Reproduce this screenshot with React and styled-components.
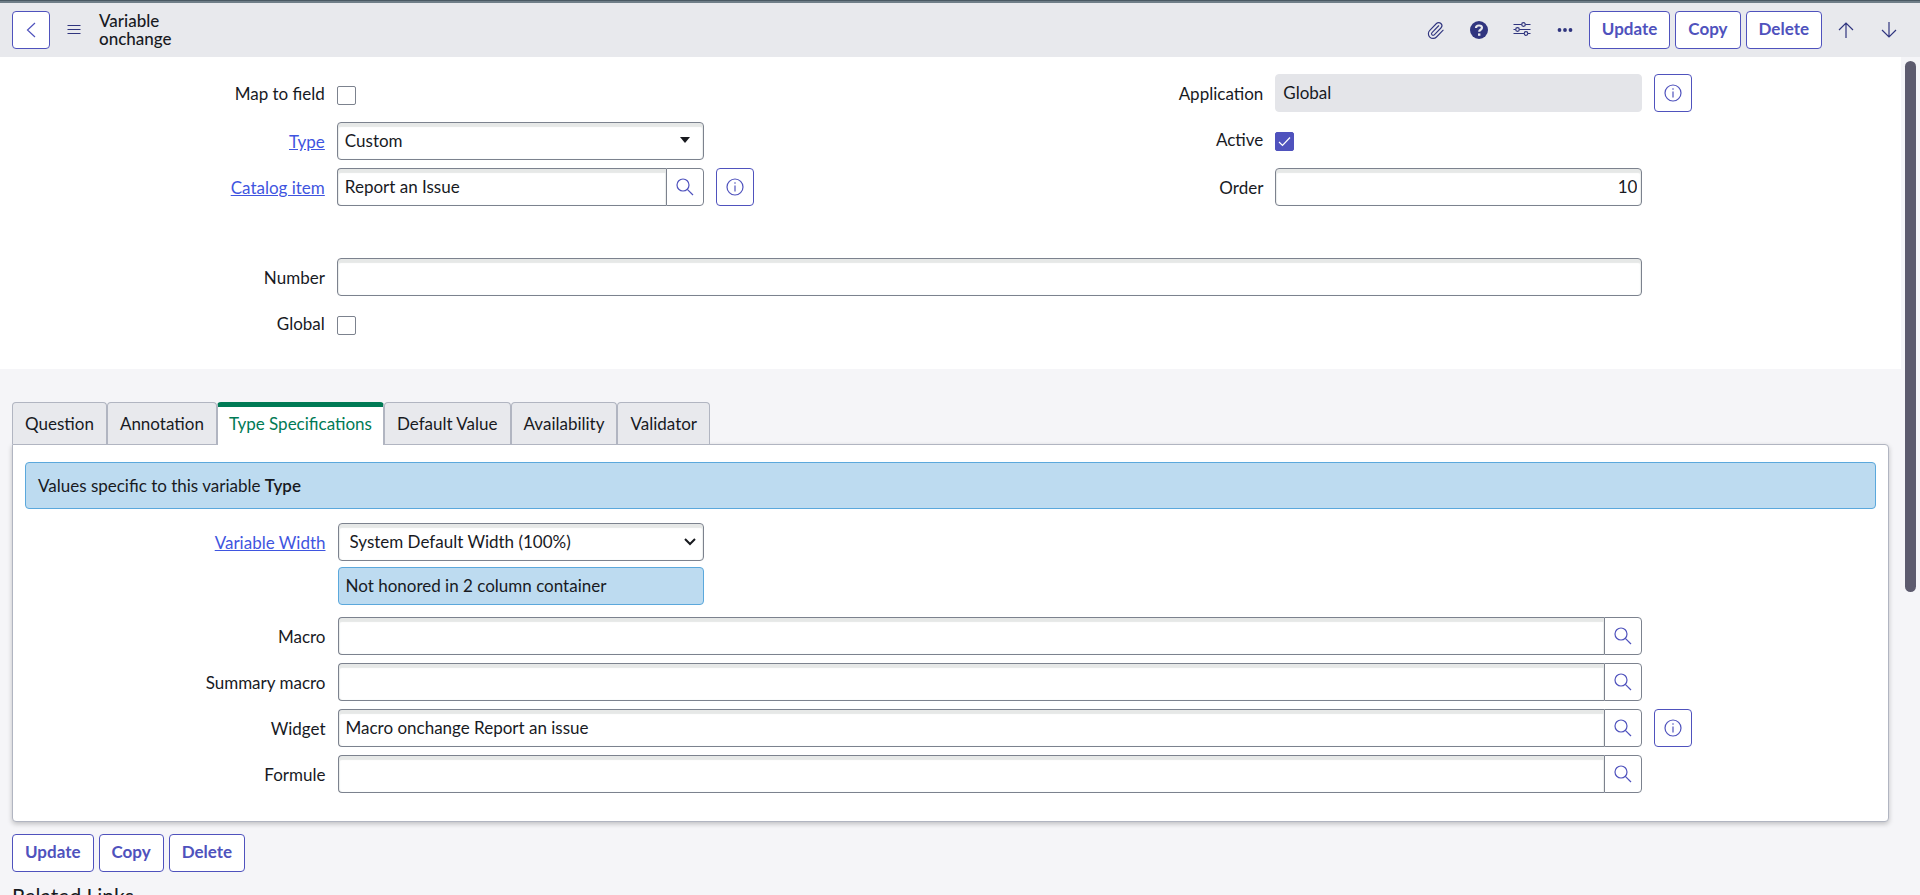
import React, { useState } from 'react'
import styled, { createGlobalStyle, css } from 'styled-components'
import { Paperclip } from 'lucide-react'

const GlobalStyle = createGlobalStyle`
    * { box-sizing: border-box; }
    body {
        margin: 0;
        background-color: #f5f5f8;
        color: #181a1f;
        font-family: Lato, sans-serif;
        font-size: 17px;
        line-height: 24px;
    }
    button, input, select { font: inherit; color: inherit; }
`

const Page = styled.div`
    display: flex;
    flex-direction: column;
    height: 100vh;
    overflow: hidden;
    border-top: 1px solid #4a5963;
`

const Header = styled.header`
    display: flex;
    flex-shrink: 0;
    align-items: center;
    gap: 5px;
    height: 56px;
    padding: 0 12px;
    background-color: #e8e9ed;
    border-top: 2px solid #6f7e88;
`

const Title = styled.h1`
    margin: 0 auto 0 0;
    padding-left: 1px;
    font-size: 17px;
    line-height: 18px;
    font-weight: 500;
    span { display: block; }
`

const Button = styled.button`
    height: 38px;
    padding: 0 12px 2px;
    border: 1px solid #4f52bd;
    border-radius: 4px;
    background-color: #fff;
    color: #4f52bd;
    font-weight: 700;
    cursor: pointer;
`

const SquareButton = styled(Button)`
    display: flex;
    flex-shrink: 0;
    align-items: center;
    justify-content: center;
    width: 38px;
    padding: 0;
`

const BareButton = styled(SquareButton)`
    border-color: transparent;
    background-color: transparent;
    color: #30357f;
`

const Body = styled.div`
    display: flex;
    flex: 1;
    min-height: 0;
`

const Content = styled.main`
    flex: 1;
    min-width: 0;
    overflow: hidden;
`

const ScrollTrack = styled.div`
    width: 19px;
    padding: 4px;
    background-color: #f5f5f8;
`

const ScrollThumb = styled.div`
    width: 11px;
    height: 64%;
    border-radius: 6px;
    background-color: #5d5b6e;
`

const MainSection = styled.section`
    padding: 17px 12px 25px;
    background-color: #fff;
`

const Columns = styled.div`
    display: grid;
    grid-template-columns: 1fr 1fr;
`

const Stack = styled.div`
    display: flex;
    flex-direction: column;
    gap: 8px;
`

const LowerStack = styled(Stack)`
    margin-top: 52px;
`

// label / control / addon, on the same 24 column grid for half and full rows
const Row = styled.div`
    display: grid;
    grid-template-columns: ${props => props.$full
        ? 'minmax(0, 4fr) minmax(0, 17fr) minmax(0, 3fr)'
        : 'minmax(0, 8fr) minmax(0, 10fr) minmax(0, 6fr)'};
    align-items: center;
    min-height: ${props => props.$check ? 40 : 38}px;
`

const Label = styled.label`
    padding-top: ${props => props.$check ? 0 : 2}px;
    text-align: right;
    a { color: #3f55e0; text-decoration: underline; }
`

const Cell = styled.div`
    display: flex;
    min-width: 0;
    padding: 0 12px;
`

const field = css`
    width: 100%;
    min-width: 0;
    height: 38px;
    border: 1px solid #7c828e;
    border-radius: 4px;
    background-color: #fff;
    box-shadow: inset 0 4px 1px #e6e8e7, inset 1px 0 1px #eceeed, inset -1px 0 1px #eceeed;
`

const Input = styled.input`
    ${field}
    padding: 0 ${props => props.$number ? 4 : 7}px 2px 7px;
    text-align: ${props => props.$number ? 'right' : 'left'};
    ${props => props.$joined && css`
        border-right: 0;
        border-radius: 4px 0 0 4px;
    `}
    &:read-only {
        border-color: #e4e5e9;
        background-color: #e4e5e9;
        box-shadow: none;
    }
`

const LookupButton = styled(SquareButton)`
    border-color: #7c828e;
    border-radius: 0 4px 4px 0;
`

const SelectBox = styled.div`
    position: relative;
    width: 100%;
    svg {
        position: absolute;
        top: 0;
        right: 8px;
        height: 36px;
        pointer-events: none;
    }
`

const Select = styled.select`
    ${field}
    display: block;
    padding: 0 32px 0 ${props => props.$indent ? 11 : 7}px;
    appearance: none;
`

const CheckBox = styled.div`
    position: relative;
    display: flex;
    margin-top: 3px;
    svg {
        position: absolute;
        top: 0;
        left: 0;
        pointer-events: none;
    }
`

const Check = styled.input`
    width: 19px;
    height: 19px;
    margin: 0;
    border: 1px solid #7c828e;
    border-radius: 2px;
    background-color: #fff;
    appearance: none;
    &:checked {
        border-color: #4f52bd;
        background-color: #4f52bd;
    }
`

const TabSection = styled.section`
    padding: 33px 12px 12px;
`

const Tabs = styled.div`
    display: flex;
`

const Tab = styled.button`
    height: 42px;
    padding: 0 12px;
    border: 1px solid #b1b5c1;
    border-bottom: 0;
    border-radius: 4px 4px 0 0;
    background-color: #e8e9ed;
    cursor: pointer;
    ${props => props.$active && css`
        position: relative;
        height: 43px;
        margin-bottom: -1px;
        padding: 0 11px 5px;
        border-top: 5px solid #007a55;
        background-color: #fff;
        color: #007a55;
    `}
`

const Panel = styled.div`
    padding: 17px 0 28px;
    border: 1px solid #b1b5c1;
    border-radius: 0 4px 4px 4px;
    background-color: #fff;
    box-shadow: 0 2px 5px rgba(0, 0, 0, 0.22);
`

const Banner = styled.div`
    margin: 0 12px 14px;
    padding: 11px 12px 10px;
    border: 1px solid #5ba8dc;
    border-radius: 4px;
    background-color: #bddbf0;
    b { font-weight: 600; }
`

const WidthRows = styled(Stack)`
    gap: 6px;
    margin-bottom: 12px;
`

const Note = styled.div`
    grid-column: 2;
    height: 38px;
    margin: 0 12px;
    padding: 6px 7px;
    border: 1px solid #5ba8dc;
    border-radius: 4px;
    background-color: #bddbf0;
`

const Actions = styled.div`
    display: flex;
    gap: 5px;
    padding: 0 12px;
`

const Related = styled.h2`
    margin: 10px 12px 0;
    font-size: 21px;
    line-height: 28px;
    font-weight: 400;
`

const Icon = ({ size = 18, children, ...rest }) => (
    <svg width={size} height={size} viewBox={`0 0 ${size} ${size}`} fill="none"
        stroke="currentColor" strokeWidth="1.2" aria-hidden="true" {...rest}>
        {children}
    </svg>
)

const SearchIcon = () => (
    <Icon><circle cx="7" cy="7" r="6" /><path d="M11.3 11.3 17 17" /></Icon>
)

const InfoIcon = () => (
    <Icon>
        <circle cx="9" cy="9" r="8" />
        <path d="M9 7.5v6" />
        <circle cx="9" cy="5" r="0.8" fill="currentColor" stroke="none" />
    </Icon>
)

const InfoButton = () => <SquareButton aria-label="Preview record"><InfoIcon /></SquareButton>

const Lookup = ({ id, value = '' }) => (
    <Cell>
        <Input id={id} type="text" defaultValue={value} $joined />
        <LookupButton aria-label="Look up"><SearchIcon /></LookupButton>
    </Cell>
)

const CheckRow = ({ id, label, checked = false }) => {
    const [on, setOn] = useState(checked)
    return (
        <Row $check>
            <Label htmlFor={id} $check>{label}</Label>
            <Cell>
                <CheckBox>
                    <Check id={id} type="checkbox" checked={on} onChange={() => setOn(!on)} />
                    {on && <Icon size={19} stroke="#fff"><path d="M4 10l3.5 3.5L15 5.5" /></Icon>}
                </CheckBox>
            </Cell>
        </Row>
    )
}

const FormButtons = () => (
    <>
        <Button>Update</Button>
        <Button>Copy</Button>
        <Button>Delete</Button>
    </>
)

const tabs = ['Question', 'Annotation', 'Type Specifications', 'Default Value', 'Availability', 'Validator']

const lookups = [
    { id: 'macro', label: 'Macro' },
    { id: 'summary_macro', label: 'Summary macro' },
    { id: 'widget', label: 'Widget', value: 'Macro onchange Report an issue' },
    { id: 'formule', label: 'Formule' },
]

export default function App() {
    const [activeTab, setActiveTab] = useState('Type Specifications')

    return (
        <Page>
            <GlobalStyle />
            <Header>
                <SquareButton aria-label="Back">
                    <Icon><path d="M13 2 5.5 9l7.5 7" /></Icon>
                </SquareButton>
                <BareButton aria-label="Menu">
                    <Icon><path d="M2.5 4.5h13M2.5 8.5h13M2.5 12.5h13" /></Icon>
                </BareButton>
                <Title><span>Variable</span><span>onchange</span></Title>
                <BareButton aria-label="Attachments">
                    <Paperclip size={19} strokeWidth={1.4} />
                </BareButton>
                <BareButton aria-label="Help">
                    <Icon>
                        <circle cx="9" cy="9" r="9" fill="currentColor" stroke="none" />
                        <path d="M6 7c0-3.4 6-3.2 6-.2 0 2-2.8 1.9-2.8 3.9" stroke="#e8e9ed" strokeWidth="2.2" />
                        <path d="M8 12.4h2.400v2.400H8z" fill="#e8e9ed" stroke="none" />
                    </Icon>
                </BareButton>
                <BareButton aria-label="Personalize form">
                    <Icon>
                        <path d="M0.5 3.5h8M12.5 3.5h5M0.5 8.500h2M6.5 8.500h11M0.5 12.5h10.5M15 12.5h2.5" />
                        <circle cx="10.5" cy="3.5" r="1.8" />
                        <circle cx="4.5" cy="8.5" r="1.8" />
                        <circle cx="13" cy="12.5" r="1.8" />
                    </Icon>
                </BareButton>
                <BareButton aria-label="More options">
                    <Icon fill="currentColor" stroke="none">
                        <circle cx="3.5" cy="9" r="1.9" /><circle cx="9" cy="9" r="1.9" /><circle cx="14.5" cy="9" r="1.9" />
                    </Icon>
                </BareButton>
                <FormButtons />
                <BareButton aria-label="Previous record">
                    <Icon><path d="M9 17V2M2 9l7-7 7 7" /></Icon>
                </BareButton>
                <BareButton aria-label="Next record">
                    <Icon><path d="M9 1v15M2 9l7 7 7-7" /></Icon>
                </BareButton>
            </Header>
            <Body>
                <Content>
                    <MainSection>
                        <Columns>
                            <Stack>
                                <CheckRow id="map_to_field" label="Map to field" />
                                <Row>
                                    <Label htmlFor="type"><a href="#type">Type</a></Label>
                                    <Cell>
                                        <SelectBox>
                                            <Select id="type"><option>Custom</option></Select>
                                            <Icon size={22}><path d="M6 8h10l-5 6z" fill="currentColor" stroke="none" /></Icon>
                                        </SelectBox>
                                    </Cell>
                                </Row>
                                <Row>
                                    <Label htmlFor="catalog_item"><a href="#catalog_item">Catalog item</a></Label>
                                    <Lookup id="catalog_item" value="Report an Issue" />
                                    <InfoButton />
                                </Row>
                            </Stack>
                            <Stack>
                                <Row>
                                    <Label htmlFor="application">Application</Label>
                                    <Cell><Input id="application" type="text" value="Global" readOnly /></Cell>
                                    <InfoButton />
                                </Row>
                                <CheckRow id="active" label="Active" checked />
                                <Row>
                                    <Label htmlFor="order">Order</Label>
                                    <Cell><Input id="order" type="text" defaultValue="10" $number /></Cell>
                                </Row>
                            </Stack>
                        </Columns>
                        <LowerStack>
                            <Row $full>
                                <Label htmlFor="number">Number</Label>
                                <Cell><Input id="number" type="text" /></Cell>
                            </Row>
                            <Columns>
                                <CheckRow id="global" label="Global" />
                            </Columns>
                        </LowerStack>
                    </MainSection>
                    <TabSection>
                        <Tabs role="tablist">
                            {tabs.map(tab => (
                                <Tab key={tab} role="tab" aria-selected={tab === activeTab}
                                    $active={tab === activeTab} onClick={() => setActiveTab(tab)}>
                                    {tab}
                                </Tab>
                            ))}
                        </Tabs>
                        <Panel>
                            <Banner>Values specific to this variable <b>Type</b></Banner>
                            <Columns>
                                <WidthRows>
                                    <Row>
                                        <Label htmlFor="variable_width"><a href="#variable_width">Variable Width</a></Label>
                                        <Cell>
                                            <SelectBox>
                                                <Select id="variable_width" $indent>
                                                    <option>System Default Width (100%)</option>
                                                </Select>
                                                <Icon size={12} strokeWidth="2"><path d="M1 4l5 5 5-5" /></Icon>
                                            </SelectBox>
                                        </Cell>
                                    </Row>
                                    <Row>
                                        <Note>Not honored in 2 column container</Note>
                                    </Row>
                                </WidthRows>
                            </Columns>
                            <Stack>
                                {lookups.map(({ id, label, value }) => (
                                    <Row key={id} $full>
                                        <Label htmlFor={id}>{label}</Label>
                                        <Lookup id={id} value={value} />
                                        {value && <InfoButton />}
                                    </Row>
                                ))}
                            </Stack>
                        </Panel>
                    </TabSection>
                    <Actions><FormButtons /></Actions>
                    <Related>Related Links</Related>
                </Content>
                <ScrollTrack><ScrollThumb /></ScrollTrack>
            </Body>
        </Page>
    )
}
